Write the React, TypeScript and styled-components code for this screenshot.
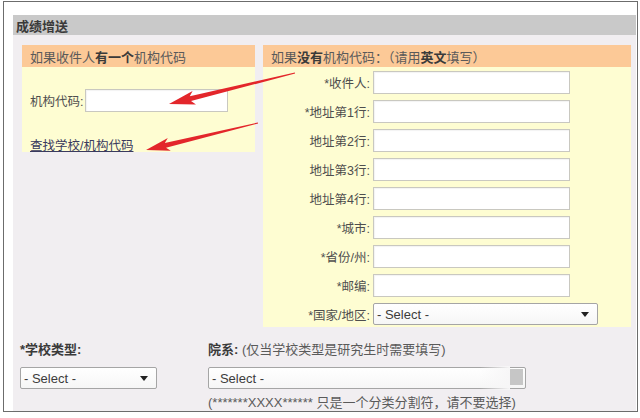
import React from "react";
import styled, { createGlobalStyle } from "styled-components";

const GlobalStyle = createGlobalStyle`
  html, body { margin: 0; padding: 0; background: #ffffff; }
  body { font-family: "Liberation Sans", "Noto Sans CJK SC", sans-serif; }
  * { box-sizing: border-box; }
`;

const cjk = `"Liberation Sans", "Noto Sans CJK SC", sans-serif`;

const Frame = styled.div`
  position: relative;
  margin: 1px 0 0 3px;
  width: 635px;
  height: 411px;
  border: 1px solid #6c6c6c;
  background: #ffffff;
  overflow: hidden;
  padding: 13px 1px 0 9px;
`;

const Section = styled.div`
  display: flex;
  flex-direction: column;
  height: 100%;
`;

const Header = styled.div`
  height: 23px;
  background: #c9c9c9;
  display: flex;
  align-items: center;
  padding-left: 3px;
  font: bold 13px ${cjk};
  color: #3a3a3a;
`;

const Body = styled.div`
  flex: 1;
  background: #f1eef1;
  padding: 10px 4px 0 9px;
`;

const PanelsRow = styled.div`
  display: flex;
  align-items: flex-start;
  gap: 8px;
`;

const Panel = styled.div<{ $w: number }>`
  width: ${(p) => p.$w}px;
  background: #fefdd2;
`;

const PanelHead = styled.div`
  height: 22px;
  background: #fcc997;
  display: flex;
  align-items: center;
  padding-left: 8px;
  font: 13px ${cjk};
  color: #5a5a5a;
  b { color: #3a3a3a; }
`;

const LeftBody = styled.div`
  height: 85px;
  padding: 22px 0 0 8px;
`;

const CodeRow = styled.div`
  display: flex;
  align-items: center;
  gap: 2px;
`;

const Label = styled.span<{ $w?: number }>`
  font: 12.5px ${cjk};
  color: #4e4e4e;
  ${(p) => (p.$w ? `width: ${p.$w}px; text-align: right; flex: none;` : "")}
`;

const TextBox = styled.div<{ $w: number }>`
  width: ${(p) => p.$w}px;
  height: 23px;
  background: #ffffff;
  border: 1px solid #c9c8c0;
  box-shadow: inset 1px 1px 1px rgba(0, 0, 0, 0.05);
`;

const Link = styled.a`
  display: inline-block;
  margin-top: 23px;
  font: 12.5px ${cjk};
  color: #3a3a5e;
  text-decoration: underline;
`;

const RightBody = styled.div`
  display: flex;
  flex-direction: column;
  gap: 7px;
  padding: 4px 0 2px 0;
`;

const FieldRow = styled.div`
  display: flex;
  align-items: center;
  gap: 3px;
  height: 22px;
`;

const Select = styled.div<{ $w: number }>`
  position: relative;
  width: ${(p) => p.$w}px;
  height: 22px;
  border: 1px solid #a5a5a5;
  border-radius: 2px;
  background: linear-gradient(#ffffff, #f6f6f6);
  display: flex;
  align-items: center;
  justify-content: space-between;
  padding: 0 8px 0 3px;
  font: 13px "Liberation Sans", sans-serif;
  color: #3c3c3c;
`;

const Caret = styled.span`
  width: 0;
  height: 0;
  border-left: 4px solid transparent;
  border-right: 4px solid transparent;
  border-top: 5px solid #222;
`;

const ScrollStub = styled.span`
  position: absolute;
  right: 2px;
  top: 1px;
  width: 13px;
  height: 16px;
  background: #c6c6c6;
`;

const FadeEdge = styled.span`
  position: absolute;
  right: 15px;
  top: -2px;
  bottom: -2px;
  width: 30px;
  background: linear-gradient(to right, rgba(241, 238, 241, 0), #f7f6f7);
`;

const BottomRow = styled.div`
  display: flex;
  margin-left: -2px;
  padding-top: 15px;
`;

const Column = styled.div<{ $w?: number }>`
  display: flex;
  flex-direction: column;
  gap: 9px;
  ${(p) => (p.$w ? `width: ${p.$w}px;` : "")}
`;

const FieldTitle = styled.div`
  font: 13px ${cjk};
  color: #5a5a5a;
  line-height: 16px;
  b { color: #3a3a3a; }
`;

const Note = styled.div`
  margin-top: -3px;
  font: 13px ${cjk};
  color: #5a5a5a;
  line-height: 16px;
`;

const Overlay = styled.svg`
  position: absolute;
  left: -4px;
  top: -2px;
  pointer-events: none;
`;

const rightFields: string[] = [
  "*收件人:",
  "*地址第1行:",
  "地址第2行:",
  "地址第3行:",
  "地址第4行:",
  "*城市:",
  "*省份/州:",
  "*邮编:",
];

export default function App() {
  return (
    <>
      <GlobalStyle />
      <Frame>
        <Section>
          <Header>成绩增送</Header>
          <Body>
            <PanelsRow>
              <Panel $w={233}>
                <PanelHead>
                  如果收件人<b>有一个</b>机构代码
                </PanelHead>
                <LeftBody>
                  <CodeRow>
                    <Label>机构代码:</Label>
                    <TextBox $w={143} />
                  </CodeRow>
                  <Link>查找学校/机构代码</Link>
                </LeftBody>
              </Panel>
              <Panel $w={368}>
                <PanelHead>
                  如果<b>没有</b>机构代码：（请用<b>英文</b>填写）
                </PanelHead>
                <RightBody>
                  {rightFields.map((f) => (
                    <FieldRow key={f}>
                      <Label $w={107}>{f}</Label>
                      <TextBox $w={197} />
                    </FieldRow>
                  ))}
                  <FieldRow>
                    <Label $w={107}>*国家/地区:</Label>
                    <Select $w={225}>
                      - Select -<Caret />
                    </Select>
                  </FieldRow>
                </RightBody>
              </Panel>
            </PanelsRow>
            <BottomRow>
              <Column $w={188}>
                <FieldTitle>
                  <b>*学校类型:</b>
                </FieldTitle>
                <Select $w={137}>
                  - Select -<Caret />
                </Select>
              </Column>
              <Column>
                <FieldTitle>
                  <b>院系:</b> (仅当学校类型是研究生时需要填写)
                </FieldTitle>
                <Select $w={318}>
                  - Select -
                  <FadeEdge />
                  <ScrollStub />
                </Select>
                <Note>(*******XXXX****** 只是一个分类分割符，请不要选择)</Note>
              </Column>
            </BottomRow>
          </Body>
        </Section>
        <Overlay width="640" height="418" viewBox="0 0 640 418">
          <polygon
            fill="#e3262b"
            points="295.1,73.5 191,101.1 196,104.5 169,104 192.6,90.9 189.8,96.3 294.9,72.5"
          />
          <polygon
            fill="#e3262b"
            points="258.1,123.5 166,147.7 170.8,150.7 146,150 167.8,138.1 164.8,142.9 257.9,122.5"
          />
        </Overlay>
      </Frame>
    </>
  );
}
